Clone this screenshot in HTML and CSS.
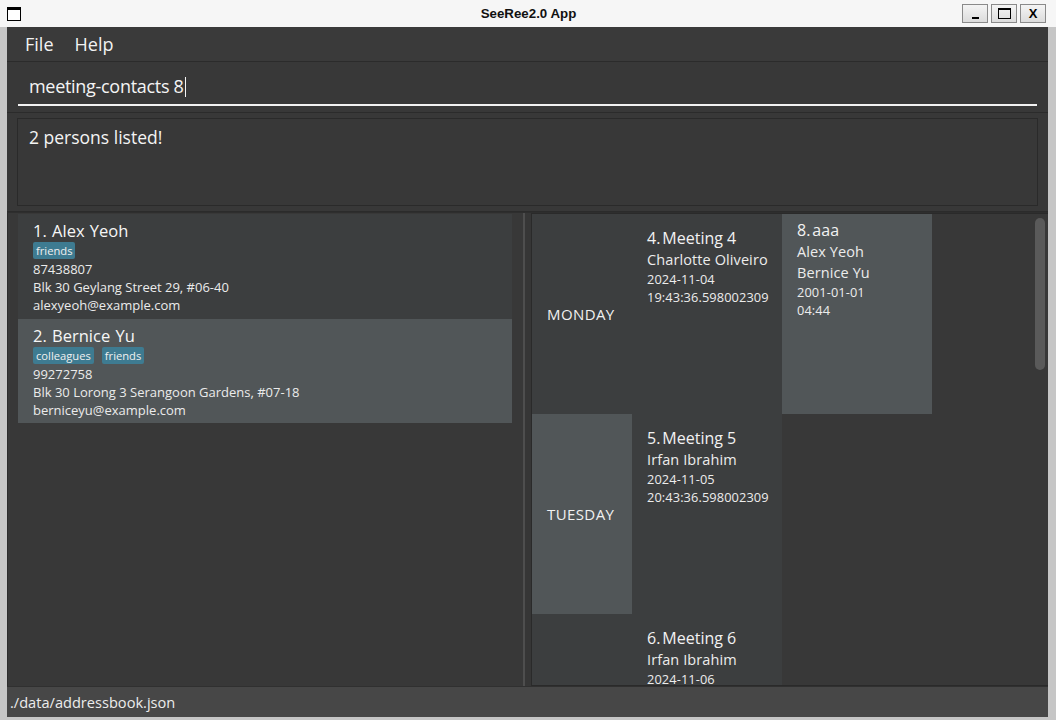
FILE: index.html
```html
<!DOCTYPE html>
<html>
<head>
<meta charset="utf-8">
<title>SeeRee2.0 App</title>
<link rel="stylesheet" href="styles.css">
</head>
<body>
<div class="window">
  <div class="titlebar">
    <div class="app-icon"></div>
    <div class="title">SeeRee2.0 App</div>
    <div class="win-buttons">
      <div class="wbtn"><span class="min-glyph"></span></div>
      <div class="wbtn"><span class="max-glyph"></span></div>
      <div class="wbtn close">X</div>
    </div>
  </div>
  <div class="app">
    <div class="menubar">
      <span class="menu-item">File</span>
      <span class="menu-item">Help</span>
    </div>
    <div class="command">
      <div class="command-input">meeting-contacts 8<span class="caret"></span></div>
    </div>
    <div class="result">
      <div class="result-box">2 persons listed!</div>
    </div>
    <div class="lower">
      <div class="left-pane">
        <div class="person-list">
          <div class="card">
            <div class="name">1. Alex Yeoh</div>
            <div class="tags"><span class="tag">friends</span></div>
            <div class="detail">87438807</div>
            <div class="detail">Blk 30 Geylang Street 29, #06-40</div>
            <div class="detail">alexyeoh@example.com</div>
          </div>
          <div class="card alt">
            <div class="name">2. Bernice Yu</div>
            <div class="tags"><span class="tag">colleagues</span><span class="tag">friends</span></div>
            <div class="detail">99272758</div>
            <div class="detail">Blk 30 Lorong 3 Serangoon Gardens, #07-18</div>
            <div class="detail">berniceyu@example.com</div>
          </div>
        </div>
      </div>
      <div class="divider"><div class="divider-line"></div></div>
      <div class="right-pane">
        <div class="schedule">
          <div class="day-row">
            <div class="day">MONDAY</div>
            <div class="meeting">
              <div class="m-title"><span>4.</span>Meeting 4</div>
              <div class="m-person">Charlotte Oliveiro</div>
              <div class="m-date">2024-11-04</div>
              <div class="m-date">19:43:36.598002309</div>
            </div>
            <div class="meeting alt top">
              <div class="m-title"><span>8.</span>aaa</div>
              <div class="m-person">Alex Yeoh</div>
              <div class="m-person">Bernice Yu</div>
              <div class="m-date">2001-01-01</div>
              <div class="m-date">04:44</div>
            </div>
          </div>
          <div class="day-row">
            <div class="day alt">TUESDAY</div>
            <div class="meeting">
              <div class="m-title"><span>5.</span>Meeting 5</div>
              <div class="m-person">Irfan Ibrahim</div>
              <div class="m-date">2024-11-05</div>
              <div class="m-date">20:43:36.598002309</div>
            </div>
          </div>
          <div class="day-row last">
            <div class="day"></div>
            <div class="meeting">
              <div class="m-title"><span>6.</span>Meeting 6</div>
              <div class="m-person">Irfan Ibrahim</div>
              <div class="m-date">2024-11-06</div>
            </div>
          </div>
        </div>
        <div class="scrollbar"></div>
      </div>
    </div>
    <div class="statusbar">./data/addressbook.json</div>
  </div>
</div>
</body>
</html>
```

FILE: styles.css
```css
* { box-sizing: border-box; }
html, body {
  margin: 0;
  padding: 0;
  width: 1056px;
  height: 720px;
  overflow: hidden;
  background: #c6c6c6;
  font-family: "Open Sans", "Noto Sans", sans-serif;
}
.window {
  display: flex;
  flex-direction: column;
  height: 720px;
}
.titlebar {
  height: 27px;
  flex: 0 0 27px;
  background: #f6f6f6;
  display: grid;
  grid-template-columns: 1fr auto 1fr;
  align-items: center;
  padding: 0 10px 0 7px;
}
.app-icon {
  width: 14px;
  height: 14px;
  border: 1px solid #000;
  border-top-width: 3px;
  background: #fff;
}
.title {
  text-align: center;
  font-family: "Liberation Sans", Arial, sans-serif;
  font-weight: bold;
  font-size: 13.3px;
  color: #111;
  transform: translateX(2px);
}
.win-buttons {
  display: flex;
  gap: 3px;
  justify-self: end;
}
.wbtn {
  width: 26px;
  height: 19px;
  border: 1px solid #8a8a8a;
  background: linear-gradient(#f4f4f4, #dcdcdc);
  display: flex;
  align-items: center;
  justify-content: center;
  font-family: "Liberation Sans", Arial, sans-serif;
  font-weight: bold;
  font-size: 13px;
  color: #000;
}
.min-glyph {
  width: 7px;
  height: 2px;
  background: #000;
  margin-top: 8px;
}
.max-glyph {
  width: 13px;
  height: 11px;
  border: 1px solid #000;
  border-top-width: 2px;
}
.app {
  flex: 1;
  margin: 0 8px 3px 7px;
  background: #383838;
  display: flex;
  flex-direction: column;
  min-height: 0;
}
.menubar {
  height: 35px;
  flex: 0 0 35px;
  background: #3a3a3a;
  border-bottom: 1px solid #2b2b2b;
  display: flex;
  align-items: center;
  padding-left: 18px;
  gap: 21px;
}
.menu-item {
  color: #f2f2f2;
  font-size: 18px;
}
.command {
  height: 51px;
  flex: 0 0 51px;
  padding: 12px 11px 0 11px;
  border-bottom: 1px solid #2b2b2b;
}
.command-input {
  height: 32px;
  border-bottom: 2px solid #f2f2f2;
  color: #f4f4f4;
  font-size: 18px;
  padding-left: 11px;
  line-height: 25px;
  letter-spacing: -0.3px;
}
.caret {
  display: inline-block;
  width: 1px;
  height: 20px;
  background: #f4f4f4;
  vertical-align: -4px;
  margin-left: 1px;
}
.result {
  height: 99px;
  flex: 0 0 99px;
  padding: 5px 10px 6px 10px;
  border-bottom: 1px solid #2b2b2b;
}
.result-box {
  height: 88px;
  border: 1px solid #2a2a2a;
  color: #f4f4f4;
  font-size: 17.5px;
  padding: 6px 11px;
}
.lower {
  flex: 1;
  display: flex;
  min-height: 0;
  border-top: 1px solid #2e2e2e;
}
.left-pane {
  width: 516px;
  flex: 0 0 516px;
  border-left: 1px solid #2c2c2c;
  padding: 1px 11px 0 10px;
  overflow: hidden;
}
.person-list {
  display: flex;
  flex-direction: column;
}
.card {
  background: #3c3e3f;
  height: 105px;
  padding: 7px 15px 0 15px;
  color: #ededed;
}
.card.alt {
  background: #515658;
  height: 104px;
  padding-top: 7px;
}
.name {
  font-size: 16.5px;
  line-height: 19px;
  color: #f6f6f6;
  word-spacing: 1px;
}
.tags {
  display: flex;
  gap: 8px;
  margin-top: 2px;
  margin-bottom: 1px;
}
.tag {
  background: #3e7b91;
  color: #f0f0f0;
  font-size: 11.2px;
  line-height: 17px;
  height: 17px;
  padding: 0 3px;
  border-radius: 2px;
}
.detail {
  font-size: 13px;
  line-height: 18px;
  color: #ebebeb;
}
.divider {
  width: 8px;
  flex: 0 0 8px;
  display: flex;
  justify-content: flex-start;
  background: #363636;
}
.divider-line {
  width: 2px;
  background: #4e4e4e;
}
.right-pane {
  flex: 1;
  border: 1px solid #2a2a2a;
  border-right: 0;
  position: relative;
  overflow: hidden;
}
.schedule {
  display: flex;
  flex-direction: column;
}
.day-row {
  display: flex;
  height: 200px;
  flex: 0 0 200px;
}
.day {
  width: 100px;
  background: #3c3e3f;
  color: #f0f0f0;
  font-size: 15px;
  display: flex;
  align-items: center;
  padding-left: 15px;
  letter-spacing: 0.4px;
}
.day.alt {
  background: #515658;
}
.meeting {
  width: 150px;
  background: #3c3e3f;
  padding: 13px 0 0 15px;
  color: #ececec;
}
.meeting.alt {
  background: #515658;
}
.meeting.top {
  padding-top: 5px;
}
.m-title {
  font-size: 16px;
  line-height: 22px;
  color: #f2f2f2;
}
.m-title span {
  margin-right: 2px;
}
.m-person {
  font-size: 14.5px;
  line-height: 21px;
  letter-spacing: 0.1px;
}
.m-date {
  font-size: 12.8px;
  line-height: 18px;
  letter-spacing: 0.1px;
}
.scrollbar {
  position: absolute;
  right: 3px;
  top: 4px;
  width: 10px;
  height: 152px;
  border-radius: 5px;
  background: #5a5a5a;
}
.statusbar {
  height: 31px;
  flex: 0 0 31px;
  background: #474747;
  color: #ececec;
  font-size: 14.6px;
  padding-left: 3px;
  display: flex;
  align-items: center;
  border-top: 1px solid #303030;
}
```
